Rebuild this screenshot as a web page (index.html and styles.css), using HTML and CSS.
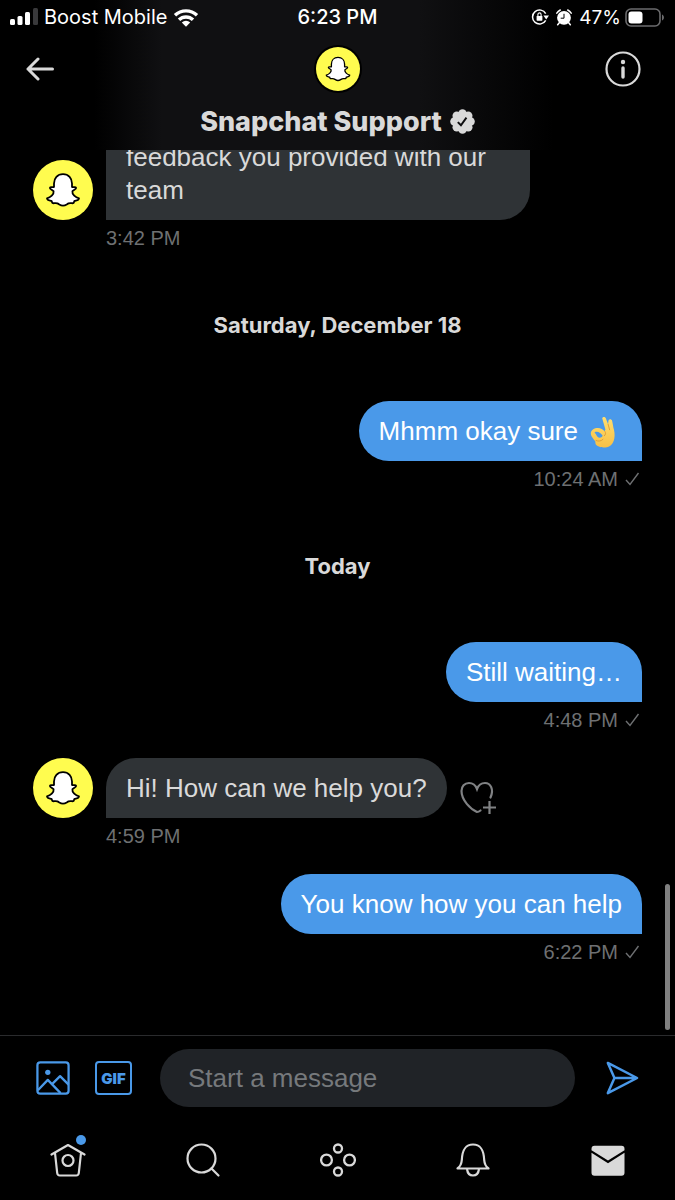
FILE: index.html
```
<!DOCTYPE html>
<html lang="en">
<head>
<meta charset="utf-8">
<meta name="viewport" content="width=device-width, initial-scale=1">
<title>Snapchat Support</title>
<link rel="stylesheet" href="styles.css">
</head>
<body>
<svg class="defs" aria-hidden="true">
  <symbol id="ghost" viewBox="0 0 60 60">
    <path d="M30 14.200c-5.600 0-9 4-9 9.300v3.500c-1.300.600-3.600-.600-4.100.700-.500 1.500 2.700 2 3.700 3.600.6 3-3.200 6.200-6.600 7 .4 2.600 3.400 2 4.600 2.800.5.700.3 1.900 1.200 2.100 1.400.200 3-.4 4.600.2 1.700.8 3.200 2.300 5.600 2.300s3.900-1.500 5.600-2.300c1.600-.6 3.200 0 4.600-.2.900-.2.700-1.400 1.200-2.100 1.200-.8 4.200-.2 4.600-2.800-3.400-.8-7.200-4-6.600-7 1-1.600 4.200-2.100 3.700-3.600-.5-1.300-2.800-.1-4.100-.7v-3.500c0-5.300-3.400-9.300-9-9.300z" fill="#fff" stroke="#000" stroke-width="1.800" stroke-linejoin="round"/>
  </symbol>
  <symbol id="tick" viewBox="0 0 16 16">
    <path d="M2 9l4 4.500L14.500 2" fill="none" stroke="currentColor" stroke-width="1.400"/>
  </symbol>
</svg>

<header class="header">
  <div class="status">
    <div class="status-side">
      <svg class="signal" viewBox="0 0 28 18"><g fill="#fff"><rect x="0" y="11" width="5" height="6" rx="1.500"/><rect x="7.500" y="8" width="5" height="9" rx="1.500"/><rect x="15" y="4" width="5" height="13" rx="1.500"/></g><rect x="23" y="0" width="5" height="17" rx="1.500" fill="#39393b"/></svg>
      <span>Boost Mobile</span>
      <svg class="wifi" viewBox="0 0 26 19"><g fill="none" stroke="#fff" stroke-width="3.400"><path d="M2 7.300a16 16 0 0 1 22 0"/><path d="M6 11.800a10 10 0 0 1 14 0"/></g><path d="M8.800 14.500a6.200 6.200 0 0 1 8.400 0L13 18.800z" fill="#fff"/></svg>
    </div>
    <time class="clock">6:23 PM</time>
    <div class="status-side status-right">
      <svg class="lock" viewBox="0 0 18 18"><path d="M14.700 12.300A7 7 0 1 1 14.700 5.700" fill="none" stroke="#fff" stroke-width="1.500"/><path d="M12.400 7.600h5.600l-2.800 3.800z" fill="#fff"/><rect x="5.600" y="8" width="5.800" height="4.700" rx=".6" fill="#fff"/><path d="M6.900 8.200V6.500a1.600 1.600 0 0 1 3.200 0v1.700" fill="none" stroke="#fff" stroke-width="1.100"/></svg>
      <svg class="alarm" viewBox="0 0 16 17"><circle cx="8" cy="8.800" r="6.900" fill="#fff"/><path d="M8 4.800v4.400H4.700" fill="none" stroke="#000" stroke-width="1"/><path d="M.8 4.200A10 10 0 0 1 4.300 1M15.200 4.200A10 10 0 0 0 11.700 1M3.300 13.800l-1.600 2M12.700 13.800l1.600 2" stroke="#fff" stroke-width="1.500" stroke-linecap="round" fill="none"/></svg>
      <span class="percent">47%</span>
      <svg class="battery" viewBox="0 0 40 19"><rect x="1" y="1" width="34" height="17" rx="5" fill="none" stroke="#6b6b6d" stroke-width="1.600"/><rect x="3.500" y="3.500" width="14" height="12" rx="3" fill="#fff"/><path d="M37 6.500c2.600 1 2.600 5 0 6z" fill="#6b6b6d"/></svg>
    </div>
  </div>
  <div class="titlebar">
    <button class="icon-btn" aria-label="Back"><svg class="back" viewBox="0 0 36 24"><path d="M26.500 12H2M12 2L2 12l10 10" fill="none" stroke="currentColor" stroke-width="3" stroke-linecap="round" stroke-linejoin="round"/></svg></button>
    <svg class="avatar avatar-small" viewBox="0 0 60 60"><use href="#ghost"/></svg>
    <button class="icon-btn" aria-label="Conversation info"><svg class="info" viewBox="0 0 36 36"><circle cx="18" cy="18" r="16.500" fill="none" stroke="currentColor" stroke-width="2.200"/><circle cx="18" cy="11" r="2.200" fill="currentColor"/><path d="M18 17v9" stroke="currentColor" stroke-width="3.400" stroke-linecap="round"/></svg></button>
  </div>
  <h1 class="name">Snapchat Support
    <svg class="verified" viewBox="0 0 24 24" role="img" aria-label="Verified"><g fill="currentColor"><circle cx="12" cy="12" r="9.500"/><circle cx="12" cy="4.300" r="4.100"/><circle cx="17.500" cy="6.500" r="4.100"/><circle cx="19.700" cy="12" r="4.100"/><circle cx="17.500" cy="17.500" r="4.100"/><circle cx="12" cy="19.700" r="4.100"/><circle cx="6.500" cy="17.500" r="4.100"/><circle cx="4.300" cy="12" r="4.100"/><circle cx="6.500" cy="6.500" r="4.100"/></g><path d="M7.500 12.600l3 3 5.300-7.300" fill="none" stroke="#0d0d0f" stroke-width="1.900"/></svg>
  </h1>
</header>

<main class="thread">
  <article class="msg">
    <div class="row">
      <svg class="avatar" viewBox="0 0 60 60"><use href="#ghost"/></svg>
      <p class="bubble bubble-long">feedback you provided with our team</p>
    </div>
    <div class="meta">3:42 PM</div>
  </article>
  <h2 class="day">Saturday, December 18</h2>
  <article class="msg mine">
    <p class="bubble">Mhmm okay sure <svg class="emoji" viewBox="0 0 26 32" role="img" aria-label="OK hand"><defs><linearGradient id="skin" x1="0" y1="0" x2="0" y2="1"><stop offset="0" stop-color="#ffdf70"/><stop offset="1" stop-color="#f8c046"/></linearGradient></defs><path fill-rule="evenodd" d="M12.200 2.200c.7-1.700 2.800-1.700 3.600.1l2.300 6c.2-1.300.1-3 .6-4.200.7-1.500 2.900-1.200 3.300.5.500 2 1 4.600 1.300 6.600 1.100 3.500 1.700 7.600 1 11.300C23.200 28 20 31.500 15.300 31.500c-4 0-8.300-.9-9.600-3.300-.5-1-.1-1.900-.5-2.900C4 23.500.8 20.300.8 17.500.8 14 4.200 12 8 12c2.700 0 5 1.400 6.600 3.200l.8-1.600zM4.500 16.300c1.200 1.500 2 3.300 3 4.500 1.500 1.500 4.300 1 5.200-1-1.700-2.800-5-5-8.200-3.500z" fill="url(#skin)"/><path d="M18.100 8.300l1.500 5.500M15 15.500c1 1.400.6 3.300-.6 4.300M6 24.500c2.500 1.200 5.500.6 7-1.200" fill="none" stroke="#d9952f" stroke-width=".8" stroke-linecap="round"/></svg></p>
    <div class="meta">10:24 AM <svg class="tick" role="img" aria-label="Sent"><use href="#tick"/></svg></div>
  </article>
  <h2 class="day">Today</h2>
  <article class="msg mine">
    <p class="bubble">Still waiting…</p>
    <div class="meta">4:48 PM <svg class="tick" role="img" aria-label="Sent"><use href="#tick"/></svg></div>
  </article>
  <article class="msg">
    <div class="row">
      <svg class="avatar" viewBox="0 0 60 60"><use href="#ghost"/></svg>
      <p class="bubble">Hi! How can we help you?</p>
      <button class="icon-btn react" aria-label="Add reaction"><svg class="heart" viewBox="0 0 36 34"><path d="M30.500 16.500C34.200 8.200 30.500 2 25 2c-4.200 0-6.800 2.800-8 6C15.800 4.800 13.200 2 9 2 4.500 2 1.500 5.500 1.500 10c0 9.500 9.500 18.500 15.500 21 1.400 0 2.400-.6 3.500-1.500" fill="none" stroke="currentColor" stroke-width="2.200" stroke-linecap="round"/><path d="M29.500 20v13M23 26.500h13" stroke="currentColor" stroke-width="2.200"/></svg></button>
    </div>
    <div class="meta">4:59 PM</div>
  </article>
  <article class="msg mine">
    <p class="bubble">You know how you can help</p>
    <div class="meta">6:22 PM <svg class="tick" role="img" aria-label="Sent"><use href="#tick"/></svg></div>
  </article>
  <div class="scroll-thumb"></div>
</main>

<form class="composer">
  <button type="button" class="icon-btn" aria-label="Add photo"><svg class="tool" viewBox="0 0 36 36"><g fill="none" stroke="currentColor" stroke-width="2.400" stroke-linejoin="round"><rect x="1.500" y="1.500" width="33" height="33" rx="3"/><path d="M2 31l10.500-11L26 34M17 24.500l8.500-8.500 9 9"/></g><circle cx="12.500" cy="12" r="2.800" fill="currentColor"/></svg></button>
  <button type="button" class="icon-btn gif" aria-label="Add GIF">GIF</button>
  <input class="field" type="text" placeholder="Start a message" aria-label="Start a message">
  <button type="submit" class="icon-btn" aria-label="Send"><svg class="tool" viewBox="0 0 36 36"><path d="M3 2l31 16L3 34l7-16zM10 18h24" fill="none" stroke="currentColor" stroke-width="2.600" stroke-linejoin="round"/></svg></button>
</form>

<nav class="tabs" aria-label="Main">
  <a href="#home" aria-label="Home"><svg class="tab" viewBox="0 0 36 36"><g fill="none" stroke="currentColor" stroke-width="2.200" stroke-linecap="round" stroke-linejoin="round"><path d="M1.500 12.500L18 3l16.500 9.500M5 11l2.200 20c.2 1.800 1 2.500 2.600 2.500h16.400c1.600 0 2.400-.7 2.600-2.500L31 11"/><circle cx="18" cy="18.500" r="5.500"/></g></svg><span class="dot"></span></a>
  <a href="#search" aria-label="Search"><svg class="tab" viewBox="0 0 36 36"><g fill="none" stroke="currentColor" stroke-width="2.200" stroke-linecap="round"><circle cx="16.500" cy="16.500" r="14"/><path d="M26.500 26.500l7 7"/></g></svg></a>
  <a href="#spaces" aria-label="Spaces"><svg class="tab" viewBox="0 0 36 36"><g fill="none" stroke="currentColor" stroke-width="2.300"><circle cx="6.500" cy="18" r="5.400"/><circle cx="29.500" cy="18" r="5.400"/><circle cx="18" cy="6.500" r="4"/><circle cx="18" cy="29.500" r="4"/></g></svg></a>
  <a href="#notifications" aria-label="Notifications"><svg class="tab" viewBox="0 0 36 36"><g fill="none" stroke="currentColor" stroke-width="2.200" stroke-linejoin="round"><path d="M2.500 26.500c3-2.200 4-4.500 4.300-8.500.4-8 2.200-15.500 11.200-15.500S28.800 10 29.200 18c.3 4 1.300 6.300 4.300 8.500z"/><path d="M12 27c.5 4 2.700 6.500 6 6.500s5.500-2.500 6-6.500"/></g></svg></a>
  <a href="#messages" aria-label="Messages"><svg class="tab" viewBox="0 0 36 36"><path d="M1.500 7c0-2.200 1-3.200 3-3.200h27c2 0 3 1 3 3.200v1.300L18 18.500 1.500 8.300z" fill="currentColor"/><path d="M1.500 10.800L18 21.300l16.500-10.500v20c0 2-1 3-3 3h-27c-2 0-3-1-3-3z" fill="currentColor"/></svg></a>
</nav>
</body>
</html>
```

FILE: styles.css
```
* {
  box-sizing: border-box;
}

body {
  margin: 0;
  height: 100vh;
  display: flex;
  flex-direction: column;
  background: #000;
  color: #d9d9d9;
  font-family: "Liberation Sans", Arial, sans-serif;
}

h1,
h2,
p {
  margin: 0;
}

svg {
  display: block;
  flex: none;
}

.defs {
  position: absolute;
  width: 0;
  height: 0;
}

.icon-btn {
  display: flex;
  padding: 0;
  border: 0;
  background: none;
  color: inherit;
  flex: none;
}

.status,
.name,
.day,
.gif {
  font-family: Inter, Roboto, sans-serif;
}

/* Header */
.header {
  flex: none;
  background: linear-gradient(90deg, #000 14%, #101012 24%, #101012 62%, #000 82%);
}

.status {
  display: grid;
  grid-template-columns: 1fr auto 1fr;
  align-items: center;
  height: 34px;
  padding: 0 10px;
  color: #fff;
  font-size: 20px;
}

.status-side {
  display: flex;
  align-items: center;
  gap: 6px;
}

.status-right {
  justify-content: flex-end;
  gap: 7px;
}

.percent {
  font-size: 19px;
  margin-right: -3px;
}

.clock {
  font-weight: 500;
}

.signal {
  width: 28px;
  height: 18px;
}

.wifi {
  width: 26px;
  height: 19px;
}

.lock {
  width: 18px;
  height: 18px;
}

.alarm {
  width: 16px;
  height: 17px;
}

.battery {
  width: 40px;
  height: 19px;
}

.titlebar {
  display: flex;
  align-items: center;
  justify-content: space-between;
  height: 70px;
  padding: 0 34px 0 26px;
}

.back {
  width: 36px;
  height: 24px;
}

.info {
  width: 36px;
  height: 36px;
}

.titlebar .avatar {
  margin-left: 8px;
}

.name {
  display: flex;
  align-items: center;
  justify-content: center;
  gap: 8px;
  height: 46px;
  padding-bottom: 12px;
  font-size: 27px;
  font-weight: 800;
}

.verified {
  width: 25px;
  height: 25px;
}

.avatar {
  width: 60px;
  height: 60px;
  border-radius: 50%;
  background: #fffc4f;
}

.avatar-small {
  width: 44px;
  height: 44px;
  box-shadow: 0 0 0 2px #000;
}

/* Conversation */
.thread {
  position: relative;
  flex: 1;
  min-height: 0;
  display: flex;
  flex-direction: column;
  justify-content: flex-end;
  gap: 20px;
  padding: 0 33px 65px;
  overflow: hidden;
}

.msg {
  flex: none;
}

.row {
  display: flex;
  align-items: flex-end;
  gap: 13px;
}

.mine {
  display: flex;
  flex-direction: column;
  align-items: flex-end;
}

.bubble {
  max-width: 424px;
  padding: 14px 20px 13px;
  border-radius: 30px 30px 30px 0;
  background: #2f3336;
  font-size: 26px;
  line-height: 33px;
}

.bubble-long {
  border-radius: 0 0 30px 0;
}

.mine .bubble {
  display: flex;
  align-items: center;
  gap: 12px;
  border-radius: 30px 30px 0 30px;
  background: #4a99e9;
  color: #fff;
}

.emoji {
  width: 26px;
  height: 32px;
  margin-right: 6px;
}

.meta {
  display: flex;
  align-items: center;
  gap: 6px;
  padding-left: 73px;
  color: #6e7072;
  font-size: 20px;
  line-height: 36px;
}

.tick {
  width: 16px;
  height: 16px;
  margin-right: 2px;
}

.day {
  flex: none;
  padding: 34px 0 41px;
  font-size: 22px;
  font-weight: 700;
  line-height: 30px;
  text-align: center;
}

.react {
  padding: 0 0 3px;
  color: #808284;
}

.heart {
  width: 36px;
  height: 34px;
}

.scroll-thumb {
  position: absolute;
  right: 5px;
  bottom: 5px;
  width: 5px;
  height: 146px;
  border-radius: 3px;
  background: #808080;
}

/* Composer */
.composer {
  flex: none;
  display: flex;
  align-items: center;
  padding: 13px 36px 12px;
  border-top: 1px solid #2a2b2d;
  color: #4a99e9;
}

.tool {
  width: 34px;
  height: 34px;
}

.gif {
  align-items: center;
  justify-content: center;
  width: 37px;
  height: 34px;
  margin: 0 28px 0 25px;
  border: 2px solid currentColor;
  border-radius: 4px;
  font-size: 15px;
  font-weight: 900;
}

.field {
  flex: 1;
  min-width: 0;
  height: 58px;
  margin-right: 30px;
  padding: 0 28px;
  border: 0;
  border-radius: 29px;
  outline: 0;
  background: #202327;
  color: #d9d9d9;
  font-family: inherit;
  font-size: 26px;
}

.field::placeholder {
  color: #76797c;
  opacity: 1;
}

/* Bottom tabs */
.tabs {
  flex: none;
  display: grid;
  grid-template-columns: repeat(5, 1fr);
  height: 81px;
}

.tabs a {
  position: relative;
  display: flex;
  align-items: center;
  justify-content: center;
  color: #d9d9d9;
}

.tab {
  width: 36px;
  height: 36px;
}

.dot {
  position: absolute;
  top: 16px;
  left: calc(50% + 8px);
  width: 10px;
  height: 10px;
  border-radius: 50%;
  background: #4a99e9;
}
```
